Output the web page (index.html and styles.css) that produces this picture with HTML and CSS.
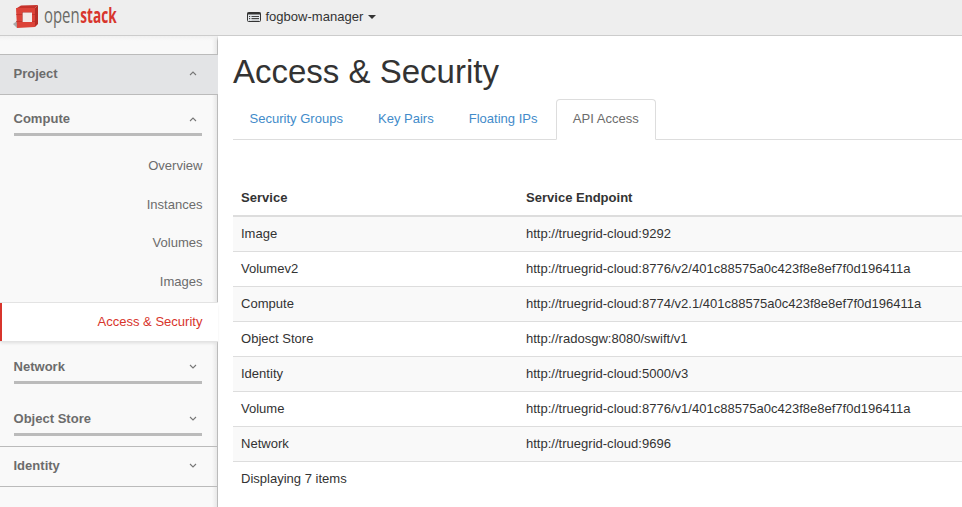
FILE: index.html
```html
<!DOCTYPE html>
<html lang="en">
<head>
<meta charset="utf-8">
<title>Access &amp; Security</title>
<link rel="stylesheet" href="styles.css">
</head>
<body>
<header class="topbar">
  <svg class="logo" width="112" height="35" viewBox="0 0 112 35" role="img" aria-label="openstack">
    <path d="M0 24 4 21 4 28Z" fill="#aaa"/>
    <path d="M4 8 8 5.500 25 5 22 8Z" fill="#c5322b"/>
    <path d="M22 8 25 5V24L22 27Z" fill="#b52d26"/>
    <path d="M3 8H22V27L4 28Z" fill="#dc4238"/>
    <path d="M9 12H19V22H9Z" fill="#f3e9e8"/>
    <path d="M9 12H19V12.600H9.600V22H9Z" fill="#b52d26"/>
    <path d="M3 14.500H9M3 21.500H9M19 14.500H25M19 21.500H25" stroke="#b52d26" stroke-width=".6"/>
    <g transform="scale(.72 1)">
      <text class="logo-text" x="43" y="23" textLength="49.500" lengthAdjust="spacingAndGlyphs">open</text>
      <text class="logo-text logo-strong" x="93.500" y="23" textLength="50.500" lengthAdjust="spacingAndGlyphs">stack</text>
    </g>
  </svg>
  <div class="switcher">
    <svg width="14" height="12" viewBox="0 0 14 12"><rect x=".5" y="1.500" width="13" height="9" rx="1" fill="#e4e8ec" stroke="#333"/><path d="M.5 2.500H13.500" stroke="#333" stroke-width="2"/><path d="M2 5.500H3.200M4.500 5.500H12M2 7.500H3.200M4.500 7.500H12" stroke="#444"/><path d="M2 9H3.200M4.500 9H12" stroke="#888" stroke-width=".6"/></svg>
    <span>fogbow-manager</span>
    <i class="caret"></i>
  </div>
</header>
<div class="layout">
  <nav class="sidebar">
    <div class="panel open">Project<svg class="chev" viewBox="0 0 8 5"><path d="M1 4 4 1 7 4"/></svg></div>
    <div class="group first"><span>Compute</span><svg class="chev" viewBox="0 0 8 5"><path d="M1 4 4 1 7 4"/></svg></div>
    <ul class="links">
      <li>Overview</li>
      <li>Instances</li>
      <li>Volumes</li>
      <li>Images</li>
    </ul>
    <div class="active">Access &amp; Security</div>
    <div class="group network"><span>Network</span><svg class="chev" viewBox="0 0 8 5"><path d="M1 1 4 4 7 1"/></svg></div>
    <div class="group store"><span>Object Store</span><svg class="chev" viewBox="0 0 8 5"><path d="M1 1 4 4 7 1"/></svg></div>
    <div class="panel identity">Identity<svg class="chev" viewBox="0 0 8 5"><path d="M1 1 4 4 7 1"/></svg></div>
  </nav>
  <main class="content">
    <h1>Access &amp; Security</h1>
    <ul class="tabs">
      <li>Security Groups</li>
      <li>Key Pairs</li>
      <li>Floating IPs</li>
      <li class="current">API Access</li>
    </ul>
    <table>
      <thead><tr><th class="service">Service</th><th>Service Endpoint</th></tr></thead>
      <tbody>
        <tr><td>Image</td><td>http://truegrid-cloud:9292</td></tr>
        <tr><td>Volumev2</td><td>http://truegrid-cloud:8776/v2/401c88575a0c423f8e8ef7f0d196411a</td></tr>
        <tr><td>Compute</td><td>http://truegrid-cloud:8774/v2.1/401c88575a0c423f8e8ef7f0d196411a</td></tr>
        <tr><td>Object Store</td><td>http://radosgw:8080/swift/v1</td></tr>
        <tr><td>Identity</td><td>http://truegrid-cloud:5000/v3</td></tr>
        <tr><td>Volume</td><td>http://truegrid-cloud:8776/v1/401c88575a0c423f8e8ef7f0d196411a</td></tr>
        <tr><td>Network</td><td>http://truegrid-cloud:9696</td></tr>
      </tbody>
      <tfoot><tr><td colspan="2">Displaying 7 items</td></tr></tfoot>
    </table>
  </main>
</div>
</body>
</html>
```
FILE: styles.css
```css
* { box-sizing: border-box; }
body {
  margin: 0;
  height: 507px;
  overflow: hidden;
  display: flex;
  flex-direction: column;
  font: 13.040px/18px "Liberation Sans", Arial, sans-serif;
  color: #333;
  background: #fff;
}
ul { list-style: none; margin: 0; padding: 0; }
.topbar {
  display: flex;
  flex: none;
  height: 36px;
  background: #eee;
  border-bottom: 1px solid #ccc;
}
.logo { margin-left: 13px; }
.logo-text { font: 21px "Open Sans", sans-serif; fill: #6a6a65; }
.logo-strong { fill: #d8352c; font-weight: 700; }
.switcher {
  display: flex;
  align-items: center;
  height: 33px;
  margin-left: 122px;
}
.switcher span { margin-left: 4.500px; }
.caret {
  margin-left: 5px;
  border: 4px solid transparent;
  border-top-color: #333;
  border-bottom: 0;
}
.layout { display: flex; flex: 1; }
.sidebar {
  width: 218px;
  flex: none;
  padding-top: 18px;
  color: #6c6c6c;
  background: linear-gradient(#f1f1f1, rgba(249, 249, 249, 0) 5px),
    linear-gradient(to left, #bbb 1px, #e8e8e8 1px, #f9f9f9 6px);
}
.panel {
  display: flex;
  align-items: center;
  justify-content: space-between;
  height: 41px;
  padding: 0 21px 2px 13.500px;
  border: solid #bbb;
  border-width: 1px 0;
  font-weight: bold;
}
.open { background: #e3e4e6; }
.chev {
  width: 8px;
  height: 5px;
  fill: none;
  stroke: #777;
  stroke-width: 1.100;
}
.group {
  display: flex;
  align-items: center;
  justify-content: space-between;
  height: 27px;
  margin: 0 16px 0 14px;
  padding: 0 5px 4px 0;
  border-bottom: 3px solid #bbb;
  font-weight: bold;
}
.group span { margin-left: -.5px; }
.network .chev, .store .chev { margin-bottom: 2px; }
.first { margin-top: 14px; }
.links {
  padding: 11px 15.500px 0 0;
  height: 166px;
  text-align: right;
}
.links li { height: 38.600px; line-height: 38px; }
.links li:nth-child(2) { line-height: 37px; }
.active {
  height: 40px;
  padding-right: 15.500px;
  text-align: right;
  line-height: 37px;
  color: #d8352c;
  background: #fff;
  border: solid #e3e3e3;
  border-width: 1px 0;
  box-shadow: inset 2px 0 #d8352c, 0 2px 3px -1px #ddd;
}
.network { margin-top: 15px; }
.store { margin-top: 25px; }
.identity { margin-top: 10px; }
.content { flex: 1; padding: 17px 0 0 15px; }
h1 {
  margin: 0;
  font-size: 33px;
  line-height: 38px;
  font-weight: normal;
}
.tabs {
  display: flex;
  height: 41px;
  margin-top: 8px;
  border-bottom: 1px solid #ddd;
  color: #428bca;
}
.tabs li {
  height: 41px;
  padding: 0 15.500px;
  margin-right: 2px;
  line-height: 37px;
  border: 1px solid transparent;
}
.tabs .current {
  padding: 0 15.800px;
  color: #6c6c6c;
  background: #fff;
  border-color: #ddd #ddd #fff;
  border-radius: 4px 4px 0 0;
}
table {
  width: 100%;
  margin-top: 40px;
  border-collapse: separate;
  border-spacing: 0;
  table-layout: fixed;
}
th, td { padding: 0 8px; text-align: left; }
th { height: 37px; border-bottom: 2px solid #ddd; }
.service { width: 285px; }
td { height: 35px; padding-bottom: 1px; border-bottom: 1px solid #ddd; }
tbody tr:nth-child(odd) { background: #f9f9f9; }
tfoot td { border: 0; }
```
